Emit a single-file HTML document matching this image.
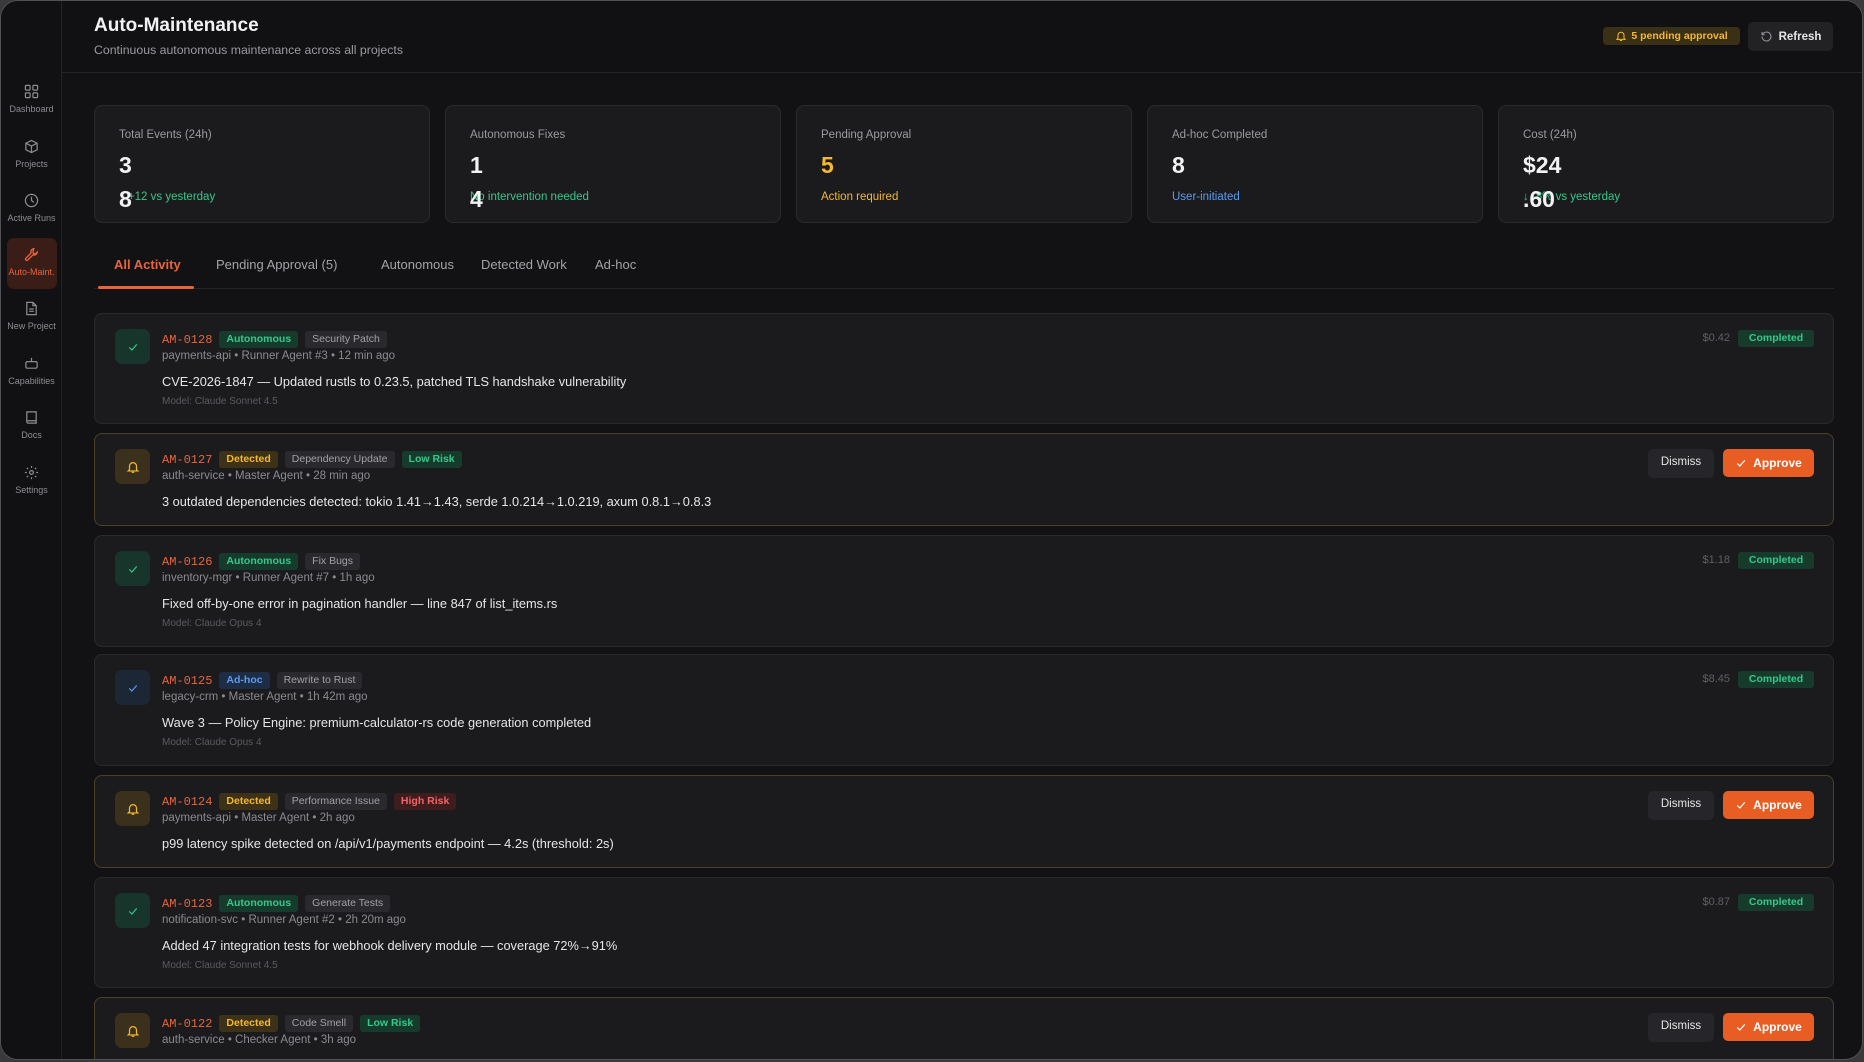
<!DOCTYPE html>
<html><head><meta charset="utf-8"><style>
*{margin:0;padding:0;box-sizing:border-box}
body{width:1864px;height:1062px;background:#3a3a3d;font-family:"Liberation Sans",sans-serif;overflow:hidden;position:relative}
#frame{position:absolute;left:0;top:0;width:1863px;height:1060px;border:1.5px solid #505055;border-radius:18px;background:#121214;overflow:hidden}
.a{position:absolute}
#side{left:0;top:0;width:61px;height:100%;background:#111113;border-right:1px solid #232326}
.ni{position:absolute;left:0;width:61px;text-align:center;color:#8d8d93;font-size:9px}
.ni svg{display:block;margin:0 auto 5px}
#hdr{left:61px;top:0;right:0;height:72px;border-bottom:1px solid #252528;background:#111113}
.card{position:absolute;top:104px;width:336px;height:118px;background:#1b1b1e;border:1px solid #2a2a2e;border-radius:8px}
.card .l{position:absolute;left:24px;top:23px;font-size:11.5px;color:#9a9aa0}
.card .n{position:absolute;left:24px;top:46px;font-size:23px;font-weight:bold;color:#f2f2f2}
.card .n2{position:absolute;left:24px;top:80px;font-size:23px;font-weight:bold;color:#f2f2f2}
.card .s{position:absolute;left:24px;top:85px;font-size:11.5px}
.tab{position:absolute;top:256px;font-size:13px;color:#a3a3a8}
.row{position:absolute;left:93px;width:1740px;background:#1b1b1e;border:1px solid #2a2a2e;border-radius:8px}
.row.d{border-color:#4a4128}
.ib{position:absolute;left:20px;top:15px;width:35px;height:35px;border-radius:7px;display:flex;align-items:center;justify-content:center}
.id{position:absolute;left:67px;top:17px;font-family:"Liberation Mono",monospace;font-size:12px;color:#e8643a;display:flex;align-items:center;gap:7px;height:17px}
.b{font-family:"Liberation Sans",sans-serif;font-size:10.5px;height:17px;line-height:17px;padding:0 7px;border-radius:3px;font-weight:bold}
.g{background:#163b2c;color:#34c98a}.y{background:#3d3218;color:#f5b82e}.t{background:#2a2a2e;color:#a0a0a6;font-weight:normal}
.r{background:#3f1d1f;color:#f06565}.bl{background:#1c2d45;color:#5b9cf0}
.meta{position:absolute;left:67px;top:36px;font-size:11.5px;color:#8a8a90}
.desc{position:absolute;left:67px;top:60px;font-size:12.8px;color:#e6e6e6}
.mod{position:absolute;left:67px;top:82px;font-size:10px;color:#5a5a60}
.cost{position:absolute;right:103px;top:16px;font-size:11px;color:#5f5f65;line-height:17px}
.comp{position:absolute;right:19px;top:16px;width:76px;text-align:center}
.dis{position:absolute;right:119px;top:15px;width:66px;height:29px;background:#26262a;border-radius:5px;color:#e6e6e6;font-size:11.5px;text-align:center;line-height:27px}
.apr{position:absolute;right:19px;top:15px;width:91px;height:28px;background:#e85d24;border-radius:5px;color:#fff;font-size:12px;font-weight:bold;display:flex;align-items:center;justify-content:center;gap:6px}
</style></head><body><div id="frame">
<div id="side" class="a">
<div class="ni" style="top:83px"><svg width="15" height="15" viewBox="0 0 16 16" fill="none" stroke="#8d8d93" stroke-width="1.3"><rect x="1.5" y="1.5" width="5" height="5" rx="1"/><rect x="9.5" y="1.5" width="5" height="5" rx="1"/><rect x="1.5" y="9.5" width="5" height="5" rx="1"/><rect x="9.5" y="9.5" width="5" height="5" rx="1"/></svg>Dashboard</div>
<div class="ni" style="top:138px"><svg width="15" height="15" viewBox="0 0 16 16" fill="none" stroke="#8d8d93" stroke-width="1.3"><path d="M8 1.5l6 3v7l-6 3-6-3v-7z M2 4.5l6 3 6-3 M8 7.5v7"/></svg>Projects</div>
<div class="ni" style="top:192px"><svg width="15" height="15" viewBox="0 0 16 16" fill="none" stroke="#8d8d93" stroke-width="1.3"><circle cx="8" cy="8" r="6.5"/><path d="M8 4v4l2.5 2"/></svg>Active Runs</div>
<div class="a" style="left:6px;top:237px;width:50px;height:51px;background:#3a1d16;border-radius:7px"></div>
<div class="ni" style="top:246px;color:#e8643a"><svg width="15" height="15" viewBox="0 0 16 16" fill="none" stroke="#e8643a" stroke-width="1.4"><path d="M10.5 1.8a3.5 3.5 0 0 0-3 4.6L2 11.9a1.4 1.4 0 0 0 2 2l5.5-5.5a3.5 3.5 0 0 0 4.6-3l-2 2-2-.5-.5-2z"/></svg>Auto-Maint.</div>
<div class="ni" style="top:300px"><svg width="15" height="15" viewBox="0 0 16 16" fill="none" stroke="#8d8d93" stroke-width="1.3"><path d="M3 1.5h6.5l3.5 3.5v9.5H3z M9.5 1.5V5H13 M5.5 8.5h5 M5.5 11h5"/></svg>New Project</div>
<div class="ni" style="top:355px"><svg width="15" height="15" viewBox="0 0 16 16" fill="none" stroke="#8d8d93" stroke-width="1.3"><rect x="2" y="6" width="12" height="7" rx="1.5"/><path d="M8 6V2"/></svg>Capabilities</div>
<div class="ni" style="top:409px"><svg width="15" height="15" viewBox="0 0 16 16" fill="none" stroke="#8d8d93" stroke-width="1.3"><path d="M3 2h10v12H4.5A1.5 1.5 0 0 1 3 12.5z M3 11.5h10"/></svg>Docs</div>
<div class="ni" style="top:464px"><svg width="15" height="15" viewBox="0 0 16 16" fill="none" stroke="#8d8d93" stroke-width="1.3"><circle cx="8" cy="8" r="2"/><path d="M8 1v2M8 13v2M1 8h2M13 8h2M3 3l1.4 1.4M11.6 11.6L13 13M3 13l1.4-1.4M11.6 4.4L13 3"/></svg>Settings</div>
</div>
<div id="hdr" class="a">
<div class="a" style="left:32px;top:14px;font-size:19px;font-weight:bold;color:#f2f2f2">Auto-Maintenance</div>
<div class="a" style="left:32px;top:42px;font-size:12.3px;color:#9a9aa0">Continuous autonomous maintenance across all projects</div>
<div class="a" style="left:1541px;top:26px;width:137px;height:18px;background:#3a3016;border-radius:4px;color:#f5b82e;font-size:10.5px;font-weight:bold;display:flex;align-items:center;justify-content:center;gap:4px"><svg width="12" height="12" viewBox="0 0 16 16" fill="none" stroke="#f5b82e" stroke-width="1.4"><path d="M4 11V7a4 4 0 0 1 8 0v4l1.5 1.5h-11z M6.5 14h3"/></svg>5 pending approval</div>
<div class="a" style="left:1686px;top:21px;width:85px;height:29px;background:#222225;border-radius:5px;color:#e6e6e6;font-size:11.5px;font-weight:bold;display:flex;align-items:center;justify-content:center;gap:6px"><svg width="13" height="13" viewBox="0 0 16 16" fill="none" stroke="#8d8d93" stroke-width="1.4"><path d="M2.5 8a5.5 5.5 0 1 0 1.6-3.9L2.5 5.7 M2.5 2.5v3.2h3.2"/></svg>Refresh</div>
</div>

<div class="card" style="left:93px"><div class="l">Total Events (24h)</div><div class="n">3</div><div class="s" style="color:#34c98a">↑ +12 vs yesterday</div><div class="n2">8</div></div>
<div class="card" style="left:444px"><div class="l">Autonomous Fixes</div><div class="n">1</div><div class="s" style="color:#34c98a">No intervention needed</div><div class="n2">4</div></div>
<div class="card" style="left:795px"><div class="l">Pending Approval</div><div class="n" style="color:#f5b82e">5</div><div class="s" style="color:#f5b82e">Action required</div></div>
<div class="card" style="left:1146px"><div class="l">Ad-hoc Completed</div><div class="n">8</div><div class="s" style="color:#5b9cf0">User-initiated</div></div>
<div class="card" style="left:1497px"><div class="l">Cost (24h)</div><div class="n">$24</div><div class="s" style="color:#34c98a">↓ -8% vs yesterday</div><div class="n2">.60</div></div>

<div class="tab" style="left:113px;color:#e8643a;font-weight:bold">All Activity</div>
<div class="tab" style="left:215px">Pending Approval (5)</div>
<div class="tab" style="left:380px">Autonomous</div>
<div class="tab" style="left:480px">Detected Work</div>
<div class="tab" style="left:594px">Ad-hoc</div>
<div class="a" style="left:93px;top:287px;width:1740px;height:1px;background:#252528"></div>
<div class="a" style="left:97px;top:285px;width:96px;height:3px;background:#e8643a;border-radius:2px"></div>

<div class="row" style="top:312px;height:111px"><div class="ib" style="background:#17352a"><svg width="12" height="12" viewBox="0 0 16 16" fill="none" stroke="#34c98a" stroke-width="1.6"><path d="M3 8.5l3.5 3.5L13 4.5"/></svg></div>
<div class="id">AM-0128<span class="b g">Autonomous</span><span class="b t">Security Patch</span></div><div class="meta">payments-api • Runner Agent #3 • 12 min ago</div><div class="desc">CVE-2026-1847 — Updated rustls to 0.23.5, patched TLS handshake vulnerability</div><div class="mod">Model: Claude Sonnet 4.5</div><div class="cost">$0.42</div><div class="b g comp">Completed</div></div>

<div class="row d" style="top:432px;height:93px"><div class="ib" style="background:#3a301c"><svg width="14" height="14" viewBox="0 0 16 16" fill="none" stroke="#f5b82e" stroke-width="1.4"><path d="M4 11V7a4 4 0 0 1 8 0v4l1.5 1.5h-11z M6.5 14h3"/></svg></div>
<div class="id">AM-0127<span class="b y">Detected</span><span class="b t">Dependency Update</span><span class="b g">Low Risk</span></div><div class="meta">auth-service • Master Agent • 28 min ago</div><div class="desc">3 outdated dependencies detected: tokio 1.41→1.43, serde 1.0.214→1.0.219, axum 0.8.1→0.8.3</div><div class="dis">Dismiss</div><div class="apr"><svg width="12" height="12" viewBox="0 0 16 16" fill="none" stroke="#fff" stroke-width="1.6"><path d="M3 8.5l3.5 3.5L13 4.5"/></svg>Approve</div></div>

<div class="row" style="top:534px;height:112px"><div class="ib" style="background:#17352a"><svg width="12" height="12" viewBox="0 0 16 16" fill="none" stroke="#34c98a" stroke-width="1.6"><path d="M3 8.5l3.5 3.5L13 4.5"/></svg></div>
<div class="id">AM-0126<span class="b g">Autonomous</span><span class="b t">Fix Bugs</span></div><div class="meta">inventory-mgr • Runner Agent #7 • 1h ago</div><div class="desc">Fixed off-by-one error in pagination handler — line 847 of list_items.rs</div><div class="mod">Model: Claude Opus 4</div><div class="cost">$1.18</div><div class="b g comp">Completed</div></div>

<div class="row" style="top:653px;height:112px"><div class="ib" style="background:#1c2736"><svg width="12" height="12" viewBox="0 0 16 16" fill="none" stroke="#5b9cf0" stroke-width="1.6"><path d="M3 8.5l3.5 3.5L13 4.5"/></svg></div>
<div class="id">AM-0125<span class="b bl">Ad-hoc</span><span class="b t">Rewrite to Rust</span></div><div class="meta">legacy-crm • Master Agent • 1h 42m ago</div><div class="desc">Wave 3 — Policy Engine: premium-calculator-rs code generation completed</div><div class="mod">Model: Claude Opus 4</div><div class="cost">$8.45</div><div class="b g comp">Completed</div></div>

<div class="row d" style="top:774px;height:93px"><div class="ib" style="background:#3a301c"><svg width="14" height="14" viewBox="0 0 16 16" fill="none" stroke="#f5b82e" stroke-width="1.4"><path d="M4 11V7a4 4 0 0 1 8 0v4l1.5 1.5h-11z M6.5 14h3"/></svg></div>
<div class="id">AM-0124<span class="b y">Detected</span><span class="b t">Performance Issue</span><span class="b r">High Risk</span></div><div class="meta">payments-api • Master Agent • 2h ago</div><div class="desc">p99 latency spike detected on /api/v1/payments endpoint — 4.2s (threshold: 2s)</div><div class="dis">Dismiss</div><div class="apr"><svg width="12" height="12" viewBox="0 0 16 16" fill="none" stroke="#fff" stroke-width="1.6"><path d="M3 8.5l3.5 3.5L13 4.5"/></svg>Approve</div></div>

<div class="row" style="top:876px;height:111px"><div class="ib" style="background:#17352a"><svg width="12" height="12" viewBox="0 0 16 16" fill="none" stroke="#34c98a" stroke-width="1.6"><path d="M3 8.5l3.5 3.5L13 4.5"/></svg></div>
<div class="id">AM-0123<span class="b g">Autonomous</span><span class="b t">Generate Tests</span></div><div class="meta">notification-svc • Runner Agent #2 • 2h 20m ago</div><div class="desc">Added 47 integration tests for webhook delivery module — coverage 72%→91%</div><div class="mod">Model: Claude Sonnet 4.5</div><div class="cost">$0.87</div><div class="b g comp">Completed</div></div>

<div class="row d" style="top:996px;height:93px"><div class="ib" style="background:#3a301c"><svg width="14" height="14" viewBox="0 0 16 16" fill="none" stroke="#f5b82e" stroke-width="1.4"><path d="M4 11V7a4 4 0 0 1 8 0v4l1.5 1.5h-11z M6.5 14h3"/></svg></div>
<div class="id">AM-0122<span class="b y">Detected</span><span class="b t">Code Smell</span><span class="b g">Low Risk</span></div><div class="meta">auth-service • Checker Agent • 3h ago</div><div class="desc">Clippy detected 12 warnings in auth module — unused imports and redundant clones</div><div class="dis">Dismiss</div><div class="apr"><svg width="12" height="12" viewBox="0 0 16 16" fill="none" stroke="#fff" stroke-width="1.6"><path d="M3 8.5l3.5 3.5L13 4.5"/></svg>Approve</div></div>
</div></body></html>
